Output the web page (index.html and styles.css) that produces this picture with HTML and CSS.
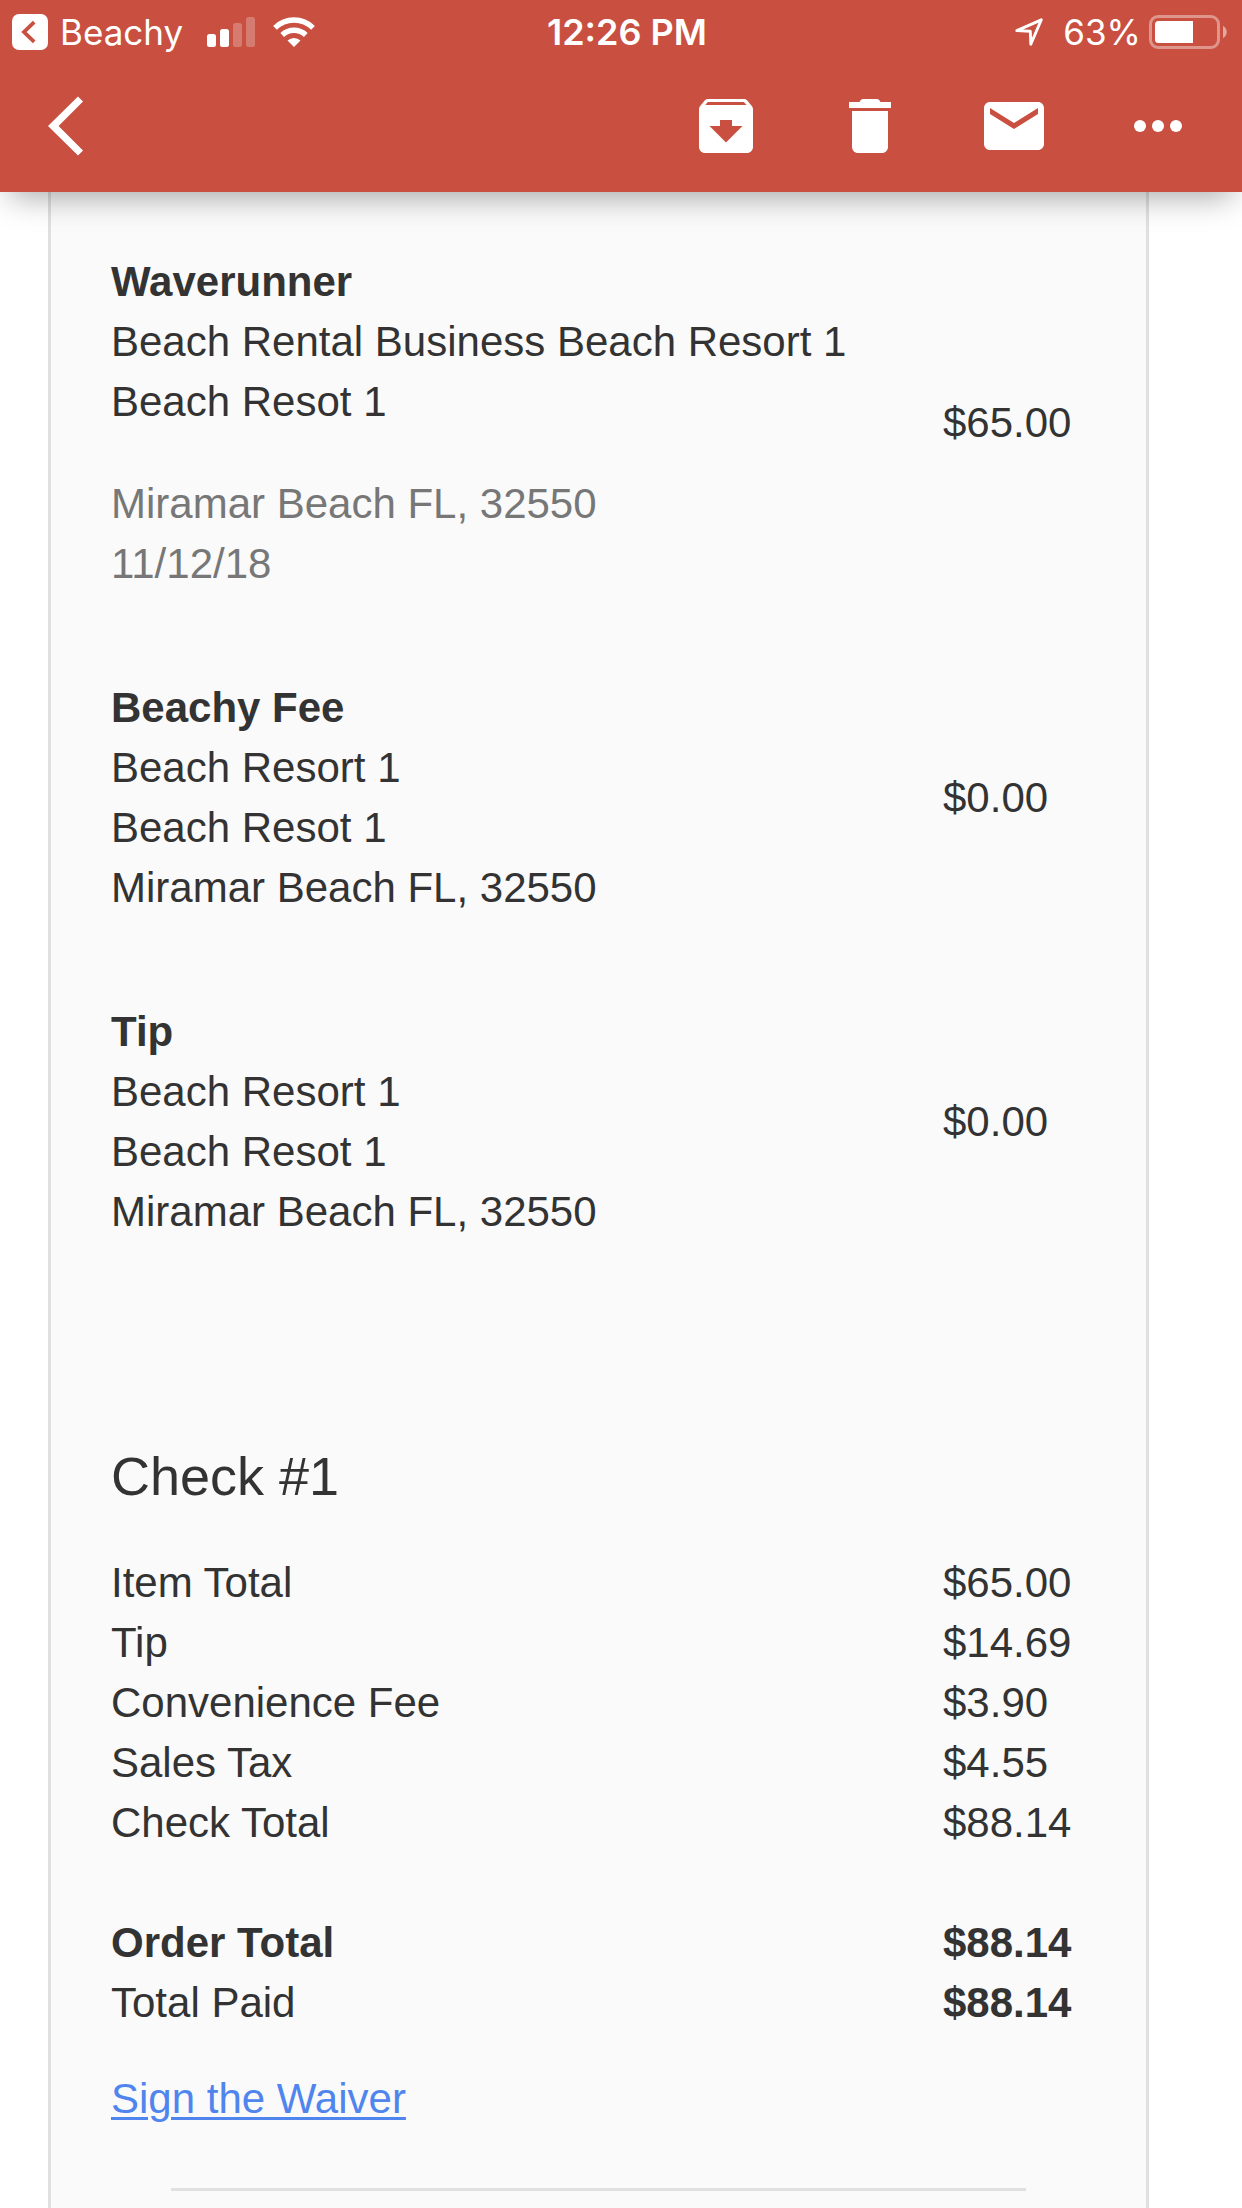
FILE: index.html
```html
<!DOCTYPE html>
<html lang="en">
<head>
  <meta charset="UTF-8" />
  <meta name="viewport" content="width=device-width, initial-scale=1.0" />
  <title>Receipt</title>
  <link rel="stylesheet" href="styles.css">
</head>
<body>
  <header class="header">
    <div class="status-bar">
      <div class="status-left">
        <a href="#" class="app-link">
          <svg width="36" height="36" viewBox="0 0 36 36" aria-hidden="true">
            <rect width="36" height="36" rx="7" fill="#fff"/>
            <path d="M22.2 8.2L12 18l10.2 9.8" fill="none" stroke="#c94f40" stroke-width="3.8"/>
          </svg>
          Beachy
        </a>
        <svg class="signal" width="48" height="30" viewBox="0 0 48 30" fill="#fff" aria-hidden="true">
          <rect x="0" y="17" width="9" height="13" rx="2.5"/>
          <rect x="13" y="12" width="9" height="18" rx="2.5"/>
          <rect x="26" y="6" width="9" height="24" rx="2.5" opacity=".25"/>
          <rect x="39" y="0" width="9" height="30" rx="2.5" opacity=".25"/>
        </svg>
        <svg class="wifi" width="42" height="30" viewBox="0 0 42 30" aria-hidden="true">
          <g fill="none" stroke="#fff" stroke-width="5.4">
            <path d="M2 10.8A27 27 0 0 1 40 10.8"/>
            <path d="M9.2 18A17 17 0 0 1 32.8 18"/>
          </g>
          <path d="M14.5 23.6a9.3 9.3 0 0 1 13 0L21 30z" fill="#fff"/>
        </svg>
      </div>
      <div class="clock">12:26 PM</div>
      <div class="status-right">
        <svg width="28" height="28" viewBox="0 0 28 28" aria-hidden="true">
          <path d="M1.8 12.6L26.3 1.8 15.8 26.2 15.3 13.2z" fill="none" stroke="#fff" stroke-width="2.9" stroke-linejoin="round"/>
        </svg>
        <span class="percent">63%</span>
        <svg width="78" height="34" viewBox="0 0 78 34" aria-hidden="true">
          <rect x="1.5" y="1.5" width="68" height="31" rx="7.5" fill="none" stroke="#fff" stroke-width="3" opacity=".4"/>
          <path d="M9.5 6H44v22H9.5A3.5 3.5 0 0 1 6 24.5v-15A3.5 3.5 0 0 1 9.5 6z" fill="#fff"/>
          <path d="M74 11c5 2 5 10 0 12z" fill="#fff" opacity=".5"/>
        </svg>
      </div>
    </div>

    <nav class="toolbar">
      <button type="button" class="icon-btn back" aria-label="Back">
        <svg width="36" height="60" viewBox="0 0 36 60"><path d="M30 .5l5 5L10.6 30 35 54.5l-5 5L0 30z" fill="#fff"/></svg>
      </button>
      <button type="button" class="icon-btn" aria-label="Archive">
        <svg width="72" height="72" viewBox="0 0 24 24"><path fill="#fff" d="M20.54 5.23l-1.39-1.68C18.88 3.21 18.47 3 18 3H6c-.47 0-.88.21-1.16.55L3.46 5.23C3.17 5.57 3 6.02 3 6.5V19c0 1.1.9 2 2 2h14c1.1 0 2-.9 2-2V6.5c0-.48-.17-.93-.46-1.27zM12 17.5L6.5 12H10v-2h4v2h3.5L12 17.5zM5.12 5l.81-1h12l.94 1H5.12z"/></svg>
      </button>
      <button type="button" class="icon-btn" aria-label="Delete">
        <svg width="72" height="72" viewBox="0 0 24 24"><path fill="#fff" d="M6 19c0 1.1.9 2 2 2h8c1.1 0 2-.9 2-2V7H6v12zM19 4h-3.5c-.3-.6-.7-1-1.2-1H9.7c-.5 0-.9.4-1.2 1H5v2h14V4z"/></svg>
      </button>
      <button type="button" class="icon-btn" aria-label="Mark as unread">
        <svg width="72" height="72" viewBox="0 0 24 24"><path fill="#fff" d="M20 4H4c-1.1 0-2 .9-2 2v12c0 1.1.9 2 2 2h16c1.1 0 2-.9 2-2V6c0-1.1-.9-2-2-2zm0 4l-8 5-8-5V6l8 5 8-5v2z"/></svg>
      </button>
      <button type="button" class="icon-btn" aria-label="More">
        <svg width="72" height="72" viewBox="0 0 24 24" fill="#fff"><circle cx="6" cy="12" r="2"/><circle cx="12" cy="12" r="2"/><circle cx="18" cy="12" r="2"/></svg>
      </button>
    </nav>
  </header>

  <main class="receipt">
    <table class="items">
      <tr>
        <td>
          <strong>Waverunner</strong><br>
          Beach Rental Business Beach Resort 1<br>
          Beach Resot 1
          <p class="details">Miramar Beach FL, 32550<br>11/12/18</p>
        </td>
        <td class="price">$65.00</td>
      </tr>
      <tr>
        <td>
          <strong>Beachy Fee</strong><br>
          Beach Resort 1<br>
          Beach Resot 1<br>
          Miramar Beach FL, 32550
        </td>
        <td class="price">$0.00</td>
      </tr>
      <tr>
        <td>
          <strong>Tip</strong><br>
          Beach Resort 1<br>
          Beach Resot 1<br>
          Miramar Beach FL, 32550
        </td>
        <td class="price">$0.00</td>
      </tr>
    </table>

    <h2 class="check-title">Check #1</h2>

    <table class="totals">
      <tbody>
        <tr><td>Item Total</td><td class="price">$65.00</td></tr>
        <tr><td>Tip</td><td class="price">$14.69</td></tr>
        <tr><td>Convenience Fee</td><td class="price">$3.90</td></tr>
        <tr><td>Sales Tax</td><td class="price">$4.55</td></tr>
        <tr><td>Check Total</td><td class="price">$88.14</td></tr>
      </tbody>
    </table>

    <table class="totals order">
      <tbody>
        <tr><td><strong>Order Total</strong></td><td class="price"><strong>$88.14</strong></td></tr>
        <tr><td>Total Paid</td><td class="price"><strong>$88.14</strong></td></tr>
      </tbody>
    </table>

    <p class="waiver"><a href="#">Sign the Waiver</a></p>
    <hr class="divider">
  </main>
</body>
</html>
```

FILE: styles.css
```css
* {
  box-sizing: border-box;
}

body {
  margin: 0;
  min-height: 100vh;
  display: flex;
  flex-direction: column;
  background-color: #fff;
  color: #333;
  font-family: "Liberation Sans", Helvetica, Arial, sans-serif;
  font-size: 42px;
  line-height: 60px;
}

svg {
  display: block;
}

/* Header */
.header {
  position: relative;
  background-color: #c94f40;
  color: #fff;
  box-shadow: 0 14px 30px -10px rgba(0, 0, 0, 0.36);
}

.status-bar {
  display: grid;
  grid-template-columns: 1fr auto 1fr;
  align-items: center;
  height: 60px;
  padding: 2px 0 0 12px;
  font-family: Inter, sans-serif;
  font-size: 35px;
}

.status-left,
.status-right,
.app-link {
  display: flex;
  align-items: center;
}

.app-link {
  gap: 12px;
  color: #fff;
  text-decoration: none;
}

.signal {
  margin-left: 24px;
}

.wifi {
  margin-left: 18px;
}

.clock {
  font-size: 36px;
  font-weight: 600;
}

.status-right {
  justify-content: flex-end;
  padding-right: 15px;
}

.percent {
  margin: 0 8px 0 20px;
}

.toolbar {
  display: flex;
  align-items: center;
  gap: 72px;
  height: 132px;
  padding: 0 48px;
}

.icon-btn {
  padding: 0;
  border: none;
  background: none;
  cursor: pointer;
}

.back {
  margin-right: auto;
}

/* Receipt */
.receipt {
  flex: 1;
  margin: 0 93px 0 48px;
  padding: 60px 60px 0;
  border: 3px solid #e0e0e0;
  border-width: 0 3px;
  background-color: #fafafa;
}

table {
  width: 100%;
  border-collapse: collapse;
}

td {
  padding: 0;
  vertical-align: middle;
}

.items td {
  padding-bottom: 84px;
}

.details {
  margin: 42px 0 0;
  color: #777;
}

.price {
  width: 143px;
}

.check-title {
  margin: 114px 0 41px;
  font-size: 54px;
  font-weight: 400;
  line-height: 72px;
}

.order {
  margin-top: 60px;
}

.waiver {
  margin: 36px 0 59px;
}

.waiver a {
  color: #5085ee;
  text-decoration-thickness: 3px;
  text-underline-offset: 4px;
}

.divider {
  height: 3px;
  margin: 0 60px;
  border: none;
  background-color: #e0e0e0;
}
```
